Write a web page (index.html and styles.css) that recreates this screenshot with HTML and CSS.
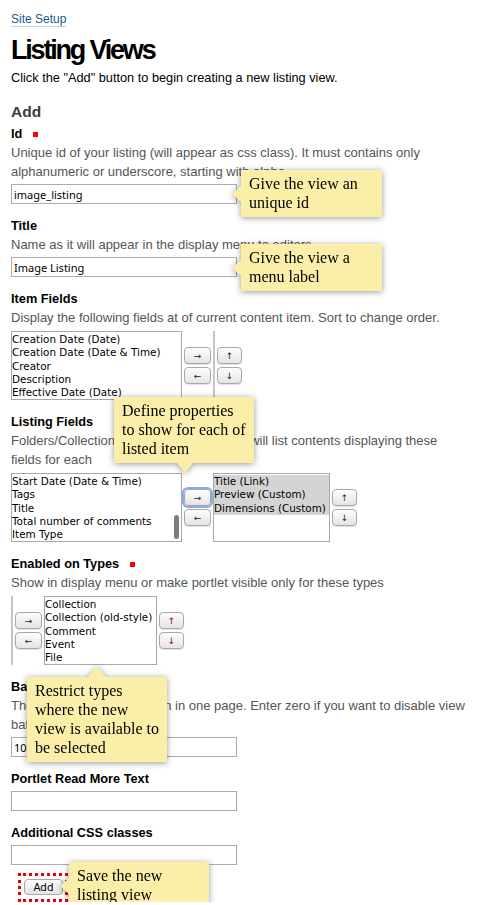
FILE: index.html
```html
<!DOCTYPE html>
<html lang="en">
<head>
    <meta charset="utf-8">
    <title>Listing Views</title>
    <link rel="stylesheet" href="styles.css">
</head>
<body>

<div class="crumbs"><a href="#">Site Setup</a></div>
<h1>Listing Views</h1>
<p class="intro">Click the "Add" button to begin creating a new listing view.</p>

<h2>Add</h2>

<div class="field">
    <label>Id<span class="required"></span></label>
    <div class="help">Unique id of your listing (will appear as css class). It must contains only alphanumeric or underscore, starting with alpha</div>
    <input class="text" type="text" value="image_listing">
</div>

<div class="field">
    <label>Title</label>
    <div class="help">Name as it will appear in the display menu to editors</div>
    <input class="text" type="text" value="Image Listing">
</div>

<div class="field">
    <label>Item Fields</label>
    <div class="help">Display the following fields at of current content item. Sort to change order.</div>
    <div class="widget">
        <div class="listbox wide">
            <div>Creation Date (Date)</div>
            <div>Creation Date (Date &amp; Time)</div>
            <div>Creator</div>
            <div>Description</div>
            <div>Effective Date (Date)</div>
        </div>
        <div class="movers">
            <button class="btn">&rarr;</button>
            <button class="btn">&larr;</button>
        </div>
        <div class="listbox empty"></div>
        <div class="movers">
            <button class="btn small">&uarr;</button>
            <button class="btn small">&darr;</button>
        </div>
    </div>
</div>

<div class="field">
    <label>Listing Fields</label>
    <div class="help">Folders/Collections using this listing view will list contents displaying these fields for each</div>
    <div class="widget">
        <div class="listbox wide">
            <div>Start Date (Date &amp; Time)</div>
            <div>Tags</div>
            <div>Title</div>
            <div>Total number of comments</div>
            <div>Item Type</div>
            <span class="thumb"></span>
        </div>
        <div class="movers">
            <button class="btn focus">&rarr;</button>
            <button class="btn">&larr;</button>
        </div>
        <div class="listbox chosen">
            <div class="sel">Title (Link)</div>
            <div class="sel">Preview (Custom)</div>
            <div class="sel">Dimensions (Custom)</div>
        </div>
        <div class="movers">
            <button class="btn small">&uarr;</button>
            <button class="btn small">&darr;</button>
        </div>
    </div>
</div>

<div class="field">
    <label>Enabled on Types<span class="required"></span></label>
    <div class="help">Show in display menu or make portlet visible only for these types</div>
    <div class="widget">
        <div class="listbox empty"></div>
        <div class="movers">
            <button class="btn">&rarr;</button>
            <button class="btn">&larr;</button>
        </div>
        <div class="listbox types">
            <div>Collection</div>
            <div>Collection (old-style)</div>
            <div>Comment</div>
            <div>Event</div>
            <div>File</div>
        </div>
        <div class="movers">
            <button class="btn small red">&uarr;</button>
            <button class="btn small red">&darr;</button>
        </div>
    </div>
</div>

<div class="field">
    <label>Batch size</label>
    <div class="help">The number of items shown in one page. Enter zero if you want to disable view batching</div>
    <input class="text" type="text" value="10">
</div>

<div class="field">
    <label>Portlet Read More Text</label>
    <input class="text" type="text" value="">
</div>

<div class="field last">
    <label>Additional CSS classes</label>
    <input class="text" type="text" value="">
</div>

<div class="save-box">
    <button class="add-button">Add</button>
</div>

<!-- callouts -->
<div class="tip left tip-id">Give the view an<br>unique id</div>
<div class="tip left tip-title">Give the view a<br>menu label</div>
<div class="tip down tip-fields">Define properties<br>to show for each of<br>listed item</div>
<div class="tip up tip-types">Restrict types<br>where the new<br>view is available to<br>be selected</div>
<div class="tip left tip-save">Save the new<br>listing view</div>

</body>
</html>
```

FILE: styles.css
```css
body {
    margin: 0;
    padding: 12px 11px 0;
    position: relative;
    font-family: "Liberation Sans", Arial, sans-serif;
    font-size: 13px;
    color: #000;
    background: #fff;
}

.crumbs {
    font-size: 12px;
    line-height: 15px;
}

.crumbs a {
    color: #205c90;
    text-decoration: none;
    border-bottom: 1px solid #d0d0d0;
}

h1 {
    margin: 9px 0 4px;
    font-size: 27px;
    line-height: 28px;
    letter-spacing: -2.2px;
}

.intro {
    margin: 0;
    font-size: 12.75px;
    line-height: 19px;
}

h2 {
    margin: 15px 0 3px;
    font-size: 15.5px;
    line-height: 20px;
    color: #3c3c3c;
}

.field {
    margin-bottom: 13px;
}

.field.last {
    margin-bottom: 0;
}

.field label {
    display: block;
    font-size: 12.75px;
    font-weight: bold;
    line-height: 18px;
}

.required {
    display: inline-block;
    width: 5px;
    height: 5px;
    margin: 0 0 1px 11px;
    background: #f00;
}

.help {
    color: #555;
    line-height: 19px;
}

.text {
    display: block;
    box-sizing: border-box;
    width: 226px;
    height: 20px;
    margin: 3px 0 0;
    padding: 0 2px;
    border: 1px solid #ababab;
    font: 11px/18px "Noto Sans", sans-serif;
    color: #000;
}

.widget {
    display: flex;
    align-items: center;
    gap: 2px;
    margin-top: 4px;
}

.listbox {
    position: relative;
    box-sizing: border-box;
    height: 69px;
    padding-top: 1px;
    border: 1px solid #a8a8a8;
    overflow: hidden;
    white-space: nowrap;
    font: 10.4px/13.33px "DejaVu Sans", sans-serif;
}

.listbox.wide {
    width: 171px;
}

.listbox.empty {
    width: 2px;
    border-color: #c4c4c4;
}

.listbox.chosen {
    width: 117px;
}

.listbox.types {
    width: 113px;
}

.listbox .sel {
    background: #d4d4d4;
}

.thumb {
    position: absolute;
    right: 2px;
    bottom: 2px;
    width: 5px;
    height: 24px;
    border-radius: 3px;
    background: #7d7d7d;
}

.movers {
    display: flex;
    flex-direction: column;
    gap: 3px;
}

.btn {
    display: flex;
    align-items: center;
    justify-content: center;
    box-sizing: border-box;
    width: 27px;
    height: 17px;
    padding: 0;
    border: 1px solid #a8a8a8;
    border-radius: 4px;
    background: linear-gradient(#fdfdfd, #e4e4e4);
    box-shadow: 0 1px 1px rgba(0, 0, 0, .12);
    font: 9px "DejaVu Sans", sans-serif;
    color: #222;
}

.btn.small {
    width: 25px;
}

.btn.focus {
    box-shadow: 0 0 0 2px #86aee3;
}

.btn.red {
    color: #8b1010;
}

.save-box {
    display: inline-block;
    margin: 8px 0 0 7px;
    padding: 3px 2px 4px 3px;
    border: 3px dotted #e8000b;
}

.add-button {
    display: block;
    box-sizing: border-box;
    width: 39px;
    height: 16px;
    padding: 0;
    border: 1px solid #a8a8a8;
    border-radius: 4px;
    background: linear-gradient(#fdfdfd, #e4e4e4);
    font: 10.4px "DejaVu Sans", sans-serif;
    color: #000;
}

/* yellow callouts laid over the form */
.tip {
    position: absolute;
    z-index: 2;
    box-sizing: border-box;
    width: 140px;
    padding: 4px 8px 5px;
    background: #faeea8;
    font: 16px/19px "Liberation Serif", "Times New Roman", serif;
    color: #000;
    white-space: nowrap;
    filter: drop-shadow(0 1px 3px rgba(0, 0, 0, .4));
}

.tip::before {
    content: "";
    position: absolute;
    border: solid transparent;
}

.tip.left::before {
    left: -9px;
    top: 50%;
    margin-top: -8px;
    border-width: 8px 9px 8px 0;
    border-right-color: #faeea8;
}

.tip.down::before {
    bottom: -10px;
    left: 63px;
    border-width: 10px 8px 0;
    border-top-color: #faeea8;
}

.tip.up::before {
    top: -11px;
    left: 61px;
    border-width: 0 9px 11px;
    border-bottom-color: #faeea8;
}

.tip-id {
    left: 241px;
    top: 170px;
    width: 141px;
}

.tip-title {
    left: 241px;
    top: 244px;
    width: 141px;
}

.tip-fields {
    left: 114px;
    top: 397px;
}

.tip-types {
    left: 27px;
    top: 677px;
}

.tip-save {
    left: 69px;
    top: 862px;
}
```
